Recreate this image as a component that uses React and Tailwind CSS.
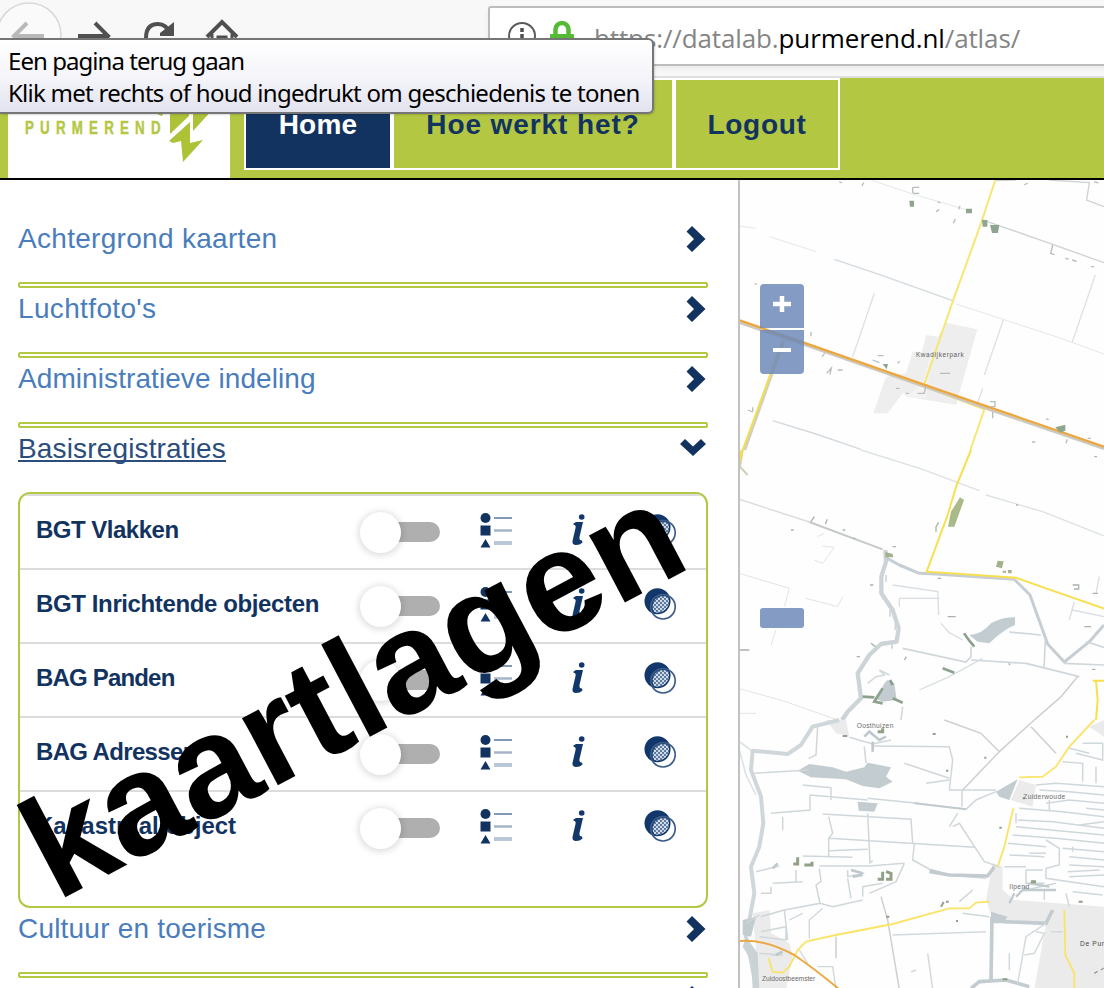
import React from "react";

const sans = "font-['Liberation_Sans',Arial,sans-serif]";

function BrowserIcons() {
  return (
    <svg className="block h-[76px] w-[260px] shrink-0" viewBox="0 0 260 76" fill="none">
      <circle cx="29" cy="35" r="32" fill="#fafafa" stroke="#d9d9d9" strokeWidth="1.600" />
      <path d="M44 36H14M27 23L14 36L27 49" stroke="#b9b9b9" strokeWidth="4" />
      <path d="M78 36H108M95 23L108 36L95 49" stroke="#505050" strokeWidth="4" />
      <path d="M146 38C146 28 151 24 158 24C164 24 168 28 170 34" stroke="#505050" strokeWidth="4" />
      <path d="M174 22V36H160V33Z" fill="#505050" />
      <path d="M207 37L222 22L237 37" stroke="#505050" strokeWidth="4" />
      <path d="M212 34V50H232V34M218 50V37H226V50" stroke="#505050" strokeWidth="3" />
    </svg>
  );
}

function Toolbar() {
  return (
    <div className="flex h-[78px] shrink-0 items-start overflow-hidden border-b-2 border-[#dedede] bg-[#f8f8f8]">
      <BrowserIcons />
      <div className="mt-[6px] ml-[228px] flex h-[60px] w-[640px] shrink-0 items-center rounded-l-[3px] border-2 border-[#bcbcbc] bg-white pl-[16px] shadow-[0_3px_6px_rgba(0,0,0,0.06)]">
        <svg className="h-[32px] w-[76px] shrink-0" viewBox="0 0 76 32" fill="none">
          <circle cx="16" cy="16" r="13" stroke="#5a5a5a" strokeWidth="2" />
          <path d="M16 8v4M16 14v9" stroke="#4f4f4f" strokeWidth="3.500" />
          <path d="M49.500 14V9.500a6.500 6.500 0 0 1 13 0V14" stroke="#55bb36" strokeWidth="4.500" />
          <rect x="44" y="14" width="24" height="14" rx="1" fill="#55bb36" />
        </svg>
        <div className="ml-[12px] pt-[4px] font-['Open_Sans','Noto_Sans',sans-serif] text-[26px] leading-[34px] tracking-[-0.120px] whitespace-nowrap text-[#858585]">
          https://datalab.<span className="text-black">purmerend.nl</span>/atlas/
        </div>
      </div>
    </div>
  );
}

function Tooltip() {
  return (
    <div className="absolute top-[38px] left-0 z-20 flex h-[76px] w-[654px] flex-col rounded-r-[6px] border-y-2 border-r-2 border-[#767676] bg-linear-to-b from-white via-[#f5f5fa] to-[#e2e3ee] pt-[5px] pl-[8px] font-['Noto_Sans','Open_Sans',sans-serif] text-[24px] leading-[32px] whitespace-nowrap text-black shadow-[1px_1px_2px_rgba(0,0,0,0.15)]">
      <span className="tracking-[-0.950px]">Een pagina terug gaan</span>
      <span className="tracking-[-0.740px]">Klik met rechts of houd ingedrukt om geschiedenis te tonen</span>
    </div>
  );
}

function Header() {
  return (
    <header className="flex h-[102px] shrink-0 border-b-2 border-black bg-[#b4c742] pl-[8px]">
      <div className="relative h-[100px] w-[222px] bg-white">
        <div className="absolute top-[40px] left-[17px] origin-left scale-x-[0.740] text-[18px] leading-[20px] font-bold tracking-[8.400px] text-[#b4c742] [-webkit-text-stroke:0.400px_#b4c742]">
          PURMEREND
        </div>
        <svg className="absolute top-[30px] left-[148px] h-[60px] w-[74px]" viewBox="156 108 74 60" fill="#aec238">
          <path d="M156 108L157 114L162 116L166 108ZM170 108V134L189 116V108ZM193 108V131L214 108Z" />
          <path d="M190 122L169 141L173 143L181 141L183 162L203 140L190 143Z" />
        </svg>
      </div>
      <nav className="ml-[14px] flex h-[92px] text-[28px] font-bold whitespace-nowrap text-[#12335f]">
        <div className="flex w-[148px] items-center justify-center border-2 border-white bg-[#12335f] pt-[2px] tracking-[0.200px] text-white">Home</div>
        <div className="flex w-[282px] items-center justify-center border-2 border-white pt-[2px] tracking-[0.900px]">Hoe werkt het?</div>
        <div className="flex w-[166px] items-center justify-center border-2 border-white pt-[2px] tracking-[0.700px]">Logout</div>
      </nav>
    </header>
  );
}

function Rule() {
  return <div className="h-[6px] shrink-0 rounded-[2px] border-2 border-[#b4c742] bg-white" />;
}

function Category({ label, open, spacing }) {
  return (
    <div className="flex h-[64px] shrink-0 justify-between text-[28px] leading-[40px] whitespace-nowrap">
      <span className={`pt-[1px] ${spacing} ${open ? "text-[#2a4d7c]" : "text-[#4a7dbb]"}`}>
        {open ? (
          <span className="relative inline-block">
            {label}
            <span className="absolute top-[31px] left-0 h-[2px] w-[208px] bg-[#2a4d7c]" />
          </span>
        ) : (
          label
        )}
      </span>
      {open ? (
        <svg className="mt-[11px] mr-[2px] h-[17px] w-[26px]" viewBox="0 0 26 17" fill="#12335f">
          <path d="M0 5L5 0L13 7.500L21 0L26 5L13 17Z" />
        </svg>
      ) : (
        <svg className="mt-[8px] mr-[2px] h-[26px] w-[20px]" viewBox="0 0 20 26" fill="#12335f">
          <path d="M0.500 5.500L6 0L19.500 13L6 26L0.500 20.500L8 13Z" />
        </svg>
      )}
    </div>
  );
}

function Toggle() {
  return (
    <div className="relative h-[40px] w-[80px]">
      <div className="absolute top-[10px] left-[10px] h-[20px] w-[70px] rounded-full bg-[#afafaf]" />
      <div className="absolute top-0 left-0 h-[41px] w-[41px] rounded-full bg-white shadow-[0_1px_6px_2px_rgba(0,0,0,0.13)]" />
    </div>
  );
}

function LegendIcon() {
  return (
    <svg className="h-[36px] w-[34px]" viewBox="0 0 34 36">
      <circle cx="5.500" cy="5" r="5" fill="#12335f" />
      <rect x="0.500" y="12.500" width="10" height="10" fill="#12335f" />
      <path d="M5.500 26L10.500 34.500H0.500Z" fill="#12335f" />
      <path d="M14 5H32" stroke="#8398b5" strokeWidth="2" />
      <path d="M14 17.500H32" stroke="#a5b4c9" strokeWidth="2.500" />
      <path d="M14 30H32" stroke="#b9c7d8" strokeWidth="4" />
    </svg>
  );
}

function InfoIcon() {
  return (
    <svg className="h-[32px] w-[14px]" viewBox="0 0 14 32" fill="#12386b">
      <circle cx="9.700" cy="3" r="2.800" />
      <path d="M1.500 9.500L4 8H11L7.500 23Q7 26.500 10 26.500L10.500 28.500Q8 31 4 31Q0 31 0.500 27L3.500 14Q4.300 11 1.500 10.800Z" />
    </svg>
  );
}

function OpacityIcon() {
  return (
    <svg className="h-[34px] w-[34px]" viewBox="0 0 34 34">
      <defs>
        <pattern id="dots" width="4" height="4" patternUnits="userSpaceOnUse">
          <rect width="4" height="4" fill="#5f7a9f" />
          <rect width="2" height="2" fill="#d0dae6" />
          <rect x="2" y="2" width="2" height="2" fill="#d0dae6" />
        </pattern>
        <clipPath id="disc">
          <circle cx="13.500" cy="13.200" r="11.500" />
        </clipPath>
      </defs>
      <circle cx="13.500" cy="13.200" r="13" fill="#12386b" />
      <circle cx="19" cy="18.500" r="10.500" fill="url(#dots)" clipPath="url(#disc)" />
      <circle cx="19" cy="18.800" r="12.200" fill="none" stroke="#3d5c86" strokeWidth="1.700" />
    </svg>
  );
}

const layers = [
  { label: "BGT Vlakken", spacing: "tracking-[-0.500px]" },
  { label: "BGT Inrichtende objecten", spacing: "tracking-[-0.380px]" },
  { label: "BAG Panden", spacing: "tracking-[-0.820px]" },
  { label: "BAG Adressen", spacing: "tracking-[-0.650px]" },
  { label: "Kadastraal object", spacing: "tracking-[0px]" },
];

function LayerRow({ label, spacing }) {
  return (
    <div className="flex h-[74px] border-t-2 border-[#dcdcdc] pl-[16px]">
      <div className={`w-[324px] pt-[18px] text-[24px] leading-[32px] font-bold whitespace-nowrap text-[#12335f] ${spacing}`}>{label}</div>
      <div className="w-[120px] pt-[16px]"><Toggle /></div>
      <div className="w-[92px] pt-[17px]"><LegendIcon /></div>
      <div className="w-[72px] pt-[18px]"><InfoIcon /></div>
      <div className="pt-[18px]"><OpacityIcon /></div>
    </div>
  );
}

function Sidebar() {
  return (
    <aside className="flex h-[808px] w-[740px] shrink-0 flex-col overflow-hidden border-r-2 border-[#c2c2c2] bg-white pt-[38px] pr-[30px] pl-[18px]">
      <Category label="Achtergrond kaarten" spacing="tracking-[0.300px]" />
      <Rule />
      <Category label="Luchtfoto's" spacing="tracking-[0.350px]" />
      <Rule />
      <Category label="Administratieve indeling" spacing="tracking-[0.080px]" />
      <Rule />
      <Category label="Basisregistraties" open spacing="tracking-[0.150px]" />
      <div className="h-[416px] shrink-0 overflow-hidden rounded-[12px] border-2 border-[#b4c742]">
        {layers.map((l) => (
          <LayerRow key={l.label} {...l} />
        ))}
      </div>
      <Category label="Cultuur en toerisme" spacing="tracking-[0.200px]" />
      <Rule />
      <Category label="" spacing="" />
    </aside>
  );
}

function MapCanvas() {
  return (
    <svg className="absolute inset-0 h-full w-full" viewBox="740 180 364 808" fill="none">
      {/* northern polder */}
      <g transform="translate(736 180) scale(.33333)">
        <path d="M630 428L724 448L660 675L515 650L500 640L455 700L412 700L450 590L510 580L530 515H558L570 465L605 470Z" fill="#eeeeee" />
        <path d="M510 652L570 655L595 480L560 610Z" fill="#f3f3f3" />
        <path d="M405 0L530 42L700 92M10 138L60 145M100 170L240 215M660 372L960 470L1104 522" stroke="#e3e7e9" strokeWidth="3" />
        <path d="M735 118L950 193L1104 248M940 0L1060 8L1052 60L1104 80M780 2L840 0" stroke="#cfd2d3" strokeWidth="4" />
        <path d="M295 238L420 280L650 362M110 722L240 762L375 808" stroke="#d3dade" strokeWidth="4" />
        <path d="M415 340L350 530M802 420L745 585M1078 285L1008 488M740 625L725 670" stroke="#dce2e5" strokeWidth="4" />
        <path d="M142 482L25 810" stroke="#cfcfc4" strokeWidth="11" />
        <path d="M142 480L20 810" stroke="#f5de4d" strokeWidth="6" />
        <path d="M778 0L735 130L650 365L565 612L620 640L745 688L703 810" stroke="#f8e674" strokeWidth="6" />
        <path d="M10 428L210 496L570 622L770 692L1104 806" stroke="#cdc9bc" strokeWidth="8" />
        <path d="M10 421L210 490L570 616L770 685L1104 800" stroke="#eda63d" strokeWidth="7" />
        <g stroke="#b8beb8" strokeWidth="4">
          <path d="M310 5l8 4M378 18l5-10M530 22h20M532 40h18M530 22v18M600 95l10-6M605 65l8 4M668 88l4-10M652 130l6-14M865 15l10-6M950 195l-6 25l12 4M988 235l10 2M1008 240l14 4M1065 260h10M225 455v14M258 530l8-10M272 580l14-16l-4 20M305 570h15M425 527h18M410 540l20 8M485 550l6-6M545 640h20l4-20M762 665h15v15h-14M770 695v20M36 690l14 6M50 682v14M930 716l8 3M990 790l4-12M888 786h10M1055 775h10M1075 5l12 4M56 312h6" />
          <path d="M480 625h10M510 640h8M612 580h30" />
        </g>
        <g fill="#8ea68f">
          <path d="M520 62h14v18h-12zM690 86h18v14h-18zM738 120h16v20h-14zM762 135h28l-4 24h-18zM440 552h16l-4 16zM958 742l30-8v18l-16 6z" />
        </g>
        <text x="540" y="532" fontSize="19" fill="#5c5c5c" letterSpacing="2" fontFamily="Liberation Sans, sans-serif">Kwadijkerpark</text>
      </g>
      {/* river and central roads */}
      <g transform="translate(736 450) scale(.33333)">
        <path d="M375 0L560 58L730 122M750 135L920 185L1104 258" stroke="#dce1e4" strokeWidth="4" />
        <path d="M10 148L220 216" stroke="#d9dcde" strokeWidth="4" />
        <path d="M220 216L440 298" stroke="#c6c9ca" strokeWidth="6" />
        <path d="M10 716L140 752L300 808M10 790L60 790M10 370L160 415L145 470M120 540L105 585M210 445L305 470L320 440M245 260L265 250M260 288L295 292L260 340L235 330" stroke="#e0e4e6" strokeWidth="3" />
        <path d="M448 300L450 335L436 380L436 430L470 480L488 535L482 575L435 582L400 615L365 670L375 745L335 785L318 810" stroke="#cdd4d8" strokeWidth="13" strokeLinejoin="round" />
        <path d="M448 322L490 345L550 370L600 372L835 388L882 435L935 582L985 636L1060 575L1104 525" stroke="#c6ced3" strokeWidth="9" strokeLinejoin="round" />
        <path d="M820 546L915 555M928 570L924 655M1050 575L1104 592M985 640L1104 645M705 630L870 640L1030 680M500 595L690 636L705 620V590" stroke="#d0d7db" strokeWidth="5" />
        <path d="M470 405L605 425L608 495M490 445H610M490 445V470M615 520L640 548L680 570M550 720L640 680L740 625M1015 455L1000 510M1010 480L1104 500M1090 380L1080 430" stroke="#d8dee2" strokeWidth="4" />
        <path d="M700 555Q735 555 765 520Q800 500 837 502L837 525Q800 540 760 580L725 575Z" fill="#c3ccd1" />
        <path d="M1025 680L975 740L895 810" stroke="#c9c9c9" strokeWidth="4" />
        <path d="M705 0L662 105L635 195L572 365L840 383L930 415L1104 476M1070 692H1104M1080 692L1085 750L1080 810" stroke="#f8df4e" strokeWidth="6" />
        <path d="M20 0L12 50L35 75" stroke="#d2d0b8" strokeWidth="6" />
        <path d="M18 0L10 35" stroke="#f6dc42" strokeWidth="8" />
        <path d="M672 142L684 150L655 230H636L645 185Z" fill="#a9b987" />
        <path d="M785 332L803 334L798 355L780 350ZM800 362h10v6h-10zM815 360h12v10h-10zM448 306L470 312L472 322H448Z" fill="#a3b28c" />
        <path d="M455 690L475 700L482 750L440 755L415 745L435 720L445 700Z" fill="#c3ccd1" />
        <path d="M462 690L470 705M440 715L415 755L440 760M380 740L415 742M470 745L500 758M620 655L655 668M684 550L700 572L715 590" stroke="#8ca28e" strokeWidth="8" />
        <path d="M395 700L420 680L445 675L430 660L460 675M500 770L495 810" stroke="#d3dadd" strokeWidth="5" />
        <path d="M225 215L235 200M268 222l6-14M320 240h8M350 265h8M165 240h8M470 290h10M402 405h10M405 580l14 10M362 620h10M505 630l6-10M600 245v-14l8-14M635 500h24M605 385h10M1010 405h18v12h-14M1070 430h16M1045 530h20M818 640l4 5M1068 658h10M1075 20h8M10 600H40M840 165h6" stroke="#a9b3aa" strokeWidth="4" />
        <path d="M450 375v20M442 430v20M462 480v20M478 520v20M468 580v16" stroke="#cfd5d8" strokeWidth="5" />
      </g>
      {/* southern water country */}
      <g transform="translate(736 720) scale(.33333)">
        <path d="M770 430L800 440V510L835 540L1104 560V808H895L930 610L770 600L750 540ZM1060 20L1104 0V50ZM850 180L900 195L890 260L825 240ZM50 580L100 570L105 640L160 670L170 705L150 808H70L60 690ZM270 0H330L340 50L300 40Z" fill="#ebebeb" />
        <path d="M310 0L230 20L195 75L155 102L50 92L45 150L75 230L82 310L70 380L45 440L55 520L42 590L30 650L62 808" stroke="#d0d7da" strokeWidth="12" strokeLinejoin="round" />
        <path d="M10 90L30 165L60 225M10 65L45 90" stroke="#dde2e4" strokeWidth="5" />
        <path d="M185 152L220 132L290 142L330 155L385 142L395 128L465 142L450 170L470 185L430 205L380 198L330 178L225 172ZM780 215L845 178L820 240L790 230ZM365 245L425 250L415 275L368 272ZM20 600L60 590L45 650L20 645ZM765 575L815 590L800 610H765Z" fill="#c3ccd0" />
        <path d="M30 650L65 700L70 808L50 808L45 720L20 680Z" fill="#cad2d6" />
        <g stroke="#d0d7da" strokeWidth="4.500">
          <path d="M245 20L240 105L218 115M340 52L410 72L465 60M385 80L390 130M410 78L640 80L650 120L640 210M505 130L640 175M570 190L640 180" />
          <path d="M55 160L220 150M200 195L285 203V240M395 235L545 250L690 268M222 225L395 240M222 225V270L105 280M140 290V330M260 282L525 298L530 370M278 290L290 340L278 355V410M395 280L402 430M280 355L715 382M280 392L395 388M535 370L530 420L585 450M60 455L130 438M200 408L350 412M250 438H400L505 430M400 430L410 422" />
          <path d="M250 445L255 485L240 495L252 550L145 570L75 590M252 550L290 560L380 540M335 450V470L385 460M380 530V500L440 490M400 520L480 485L505 430M75 520H105V500M110 490L200 485M180 450V485M335 475L345 535M75 635L150 620V660L70 650M145 570L155 660" />
          <path d="M70 585L30 610M220 655V600L260 565M160 600L200 580M70 700L140 705L105 705M190 690L215 730M245 740H290L300 808" strokeWidth="4" />
          <path d="M640 210H780M690 268L720 240L780 215M650 320L670 310L745 425L790 440M585 450L640 465L750 475M670 545L710 510M680 580L760 590M640 320L665 280M678 210V260" />
        </g>
        <path d="M535 250L690 268M585 450L640 465" stroke="#c2cbd0" strokeWidth="6" />
        <path d="M580 455L640 465L755 468L775 440" stroke="#c2cbd0" strokeWidth="10" />
        <path d="M768 590L765 780M800 605L930 610L950 570M705 805L730 785L810 780L880 800" stroke="#c3ccd1" strokeWidth="11" />
        <path d="M930 610L870 650L845 790M900 635L925 640L895 700L865 705M470 645L750 635M575 700L590 808M820 700V750M525 755L540 750M945 635H980" stroke="#d3dadd" strokeWidth="4.500" />
        <g stroke="#d0d7da" strokeWidth="4.500">
          <path d="M900 195L960 190L1104 200M910 210L1000 215L1104 225M930 250L1000 240L1104 250M850 265L980 275L1104 290M845 300L950 305L1104 325M840 320L1000 335L1104 345M830 345L960 355L1104 370M815 370L930 380M980 385L1104 395M930 360L970 385V435L930 445V475L1104 500M870 450V490H925M870 450H920M805 440H870M1000 410L1104 420M1000 435L1104 440M1000 470L1104 465M940 240V270M840 280V310M980 125L1040 130V185M1080 140V190M1040 70H1100V120L1020 100M990 520L1000 560M925 510V540M1010 515L1100 525M870 510L960 490M880 400H930M820 405L925 410M995 455L1090 450M1010 380V395M1050 265L1104 270M1030 315L1104 305M1000 85L1060 100" />
          <path d="M840 530L870 500M820 550L835 520M880 490L940 500M860 510H960" stroke="#c1cace" strokeWidth="7" />
        </g>
        <path d="M625 0L735 40L790 95L895 0M790 95L680 210M435 530L455 600L490 808M300 650V715M885 20L960 100" stroke="#cfcfcf" strokeWidth="4.500" />
        <path d="M1075 0L1000 80L960 140L920 170L850 172M832 265L805 380L785 440M760 545L720 548L700 565H640L470 612L300 645L210 665L185 690L160 740L140 758L110 756L98 715M985 570L988 705L1015 760V808" stroke="#f9e469" strokeWidth="5.500" />
        <path d="M10 663Q80 655 175 705Q240 750 310 808" stroke="#eca843" strokeWidth="6" />
        <g stroke="#91a188" strokeWidth="9">
          <path d="M172 432H185V412M205 435H228V425M425 478H440V455M450 478H465V460L450 455M425 35H440V25M885 485H900" />
          <path d="M590 42h9M745 113h6M630 152h7M790 323h7M615 560l8-14M630 545h8M660 603h6M450 590h10M990 50h6M1028 545h12M860 235h6M320 48h14M800 778h14" strokeWidth="6" />
        </g>
        <path d="M385 50L400 35L430 60L450 50M410 65V95M345 450L380 460M350 470L380 465M110 445L125 430M120 705L140 695" stroke="#bfc9cd" strokeWidth="8" />
        <g fill="#6b6b6b" fontFamily="Liberation Sans, sans-serif" fontSize="20" letterSpacing="1">
          <text x="362" y="23">Oosthuizen</text>
          <text x="862" y="237">Zuiderwoude</text>
          <text x="820" y="508">Ilpend</text>
          <text x="1032" y="678" fill="#484848" letterSpacing="2">De Purmer</text>
          <text x="78" y="782" letterSpacing="0">Zuidoostbeemster</text>
        </g>
        <path d="M1075 760l10-6M1095 750l8-6" stroke="#999" strokeWidth="4" />
      </g>
    </svg>
  );
}

function MapView() {
  return (
    <main className="relative h-[808px] w-[364px] overflow-hidden bg-[#fefefe]">
      <MapCanvas />
      <div className="absolute top-[104px] left-[20px] flex w-[44px] flex-col gap-[2px]">
        <div className="flex h-[44px] items-center justify-center rounded-t-[4px] bg-[#6f8ab8]/85">
          <svg className="mb-[4px] h-[18px] w-[18px]" viewBox="0 0 18 18"><path d="M9 1v16M0 9h18" stroke="white" strokeWidth="4.500" /></svg>
        </div>
        <div className="flex h-[44px] items-center justify-center rounded-b-[4px] bg-[#6f8ab8]/85">
          <div className="mb-[4px] h-[4px] w-[18px] bg-white" />
        </div>
      </div>
      <div className="absolute top-[428px] left-[20px] h-[20px] w-[44px] rounded-[3px] bg-[#6f8ab8]/85" />
    </main>
  );
}

export default function App() {
  return (
    <div className={`relative flex h-[988px] w-[1104px] flex-col overflow-hidden bg-white ${sans}`}>
      <Toolbar />
      <Header />
      <div className="flex">
        <Sidebar />
        <MapView />
      </div>
      <Tooltip />
      <div className="absolute top-[780.600px] left-[56.500px] z-10 origin-[0_121.900px] rotate-[-27.800deg] text-[144px] leading-none font-bold whitespace-nowrap text-black">
        kaartlagen
      </div>
    </div>
  );
}
